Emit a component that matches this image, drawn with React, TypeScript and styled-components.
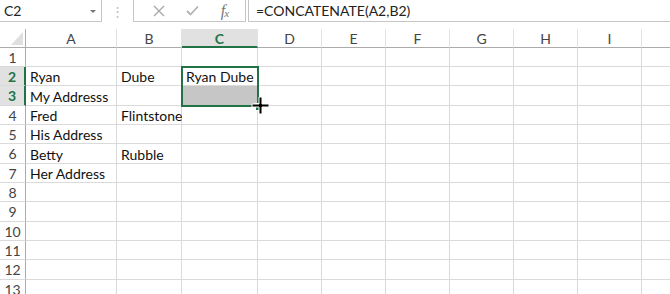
import React from 'react';
import styled, { createGlobalStyle } from 'styled-components';

const GlobalStyle = createGlobalStyle`
  html, body {
    margin: 0;
    padding: 0;
    background: #fff;
  }
  body {
    font-family: Lato, "Open Sans", sans-serif;
    overflow: hidden;
    width: 670px;
    height: 294px;
  }
`;

const GREEN = '#217346';
const GRID = '#dadada';
const HEAD_LINE = '#ababab';

// last column only peeks in at the right edge, its letter is off screen
const COLUMNS = [
  { id: 'A', width: 91, label: 'A' },
  { id: 'B', width: 65, label: 'B' },
  { id: 'C', width: 76, label: 'C' },
  { id: 'D', width: 64, label: 'D' },
  { id: 'E', width: 64, label: 'E' },
  { id: 'F', width: 64, label: 'F' },
  { id: 'G', width: 64, label: 'G' },
  { id: 'H', width: 64, label: 'H' },
  { id: 'I', width: 64, label: 'I' },
  { id: 'J', width: 64, label: '' },
];

const ROW_HEIGHTS = [19, 19, 20, 19, 19, 20, 19, 19, 20, 19, 19, 20, 19];

const DATA: Record<string, string> = {
  A2: 'Ryan',
  B2: 'Dube',
  C2: 'Ryan Dube',
  A3: 'My Addresss',
  A4: 'Fred',
  B4: 'Flintstone',
  A5: 'His Address',
  A6: 'Betty',
  B6: 'Rubble',
  A7: 'Her Address',
};

const SELECTED_COL = 'C';
const SELECTED_ROWS = [2, 3];

const Page = styled.div`
  width: 670px;
  height: 294px;
  overflow: hidden;
  display: flex;
  flex-direction: column;
`;

const TopBar = styled.div`
  display: flex;
  height: 22px;
  flex-shrink: 0;
  margin-bottom: 7px;
`;

const NameBox = styled.div`
  width: 102px;
  box-sizing: border-box;
  border-right: 1px solid #c6c6c6;
  border-bottom: 1px solid #c6c6c6;
  display: flex;
  align-items: center;
  justify-content: space-between;
  padding: 0 5px 0 4px;
  font-size: 14px;
  color: #222;
`;

const DropArrow = styled.span`
  width: 0;
  height: 0;
  border-left: 3px solid transparent;
  border-right: 3px solid transparent;
  border-top: 3px solid #777;
  margin-top: 1px;
`;

const Grip = styled.div`
  width: 31px;
  display: flex;
  align-items: center;
  justify-content: center;
  color: #bdbdbd;
  font-size: 13px;
`;

const FnButtons = styled.div`
  width: 113px;
  box-sizing: border-box;
  border-left: 1px solid #c6c6c6;
  border-right: 1px solid #c6c6c6;
  border-bottom: 1px solid #c6c6c6;
  display: flex;
  align-items: center;
  justify-content: space-around;
  padding: 0 6px 0 8px;
`;

const FxLabel = styled.span`
  font-family: "Liberation Serif", serif;
  font-style: italic;
  font-size: 16px;
  color: #777;
  letter-spacing: -1px;

  sub {
    font-size: 11px;
    vertical-align: -1px;
  }
`;

const FormulaBox = styled.div`
  flex: 1;
  margin-left: 2px;
  border-left: 1px solid #c6c6c6;
  border-bottom: 1px solid #c6c6c6;
  display: flex;
  align-items: center;
  padding-left: 7px;
  font-size: 14px;
  color: #222;
`;

const SheetWrap = styled.div`
  position: relative;
  flex: 1;
  overflow: hidden;
`;

const Sheet = styled.div`
  display: grid;
  grid-template-columns: 26px ${COLUMNS.map((c) => `${c.width}px`).join(' ')};
  grid-template-rows: 19px ${ROW_HEIGHTS.map((h) => `${h}px`).join(' ')};
`;

const Corner = styled.div`
  position: relative;
  box-sizing: border-box;
  border-right: 1px solid ${HEAD_LINE};
  border-bottom: 1px solid ${HEAD_LINE};

  &::after {
    content: '';
    position: absolute;
    right: 2px;
    bottom: 2px;
    width: 0;
    height: 0;
    border-left: 12px solid transparent;
    border-bottom: 13px solid #dfdfdf;
  }
`;

const ColHead = styled.div<{ $selected?: boolean }>`
  box-sizing: border-box;
  display: flex;
  align-items: center;
  justify-content: center;
  font-size: 14px;
  color: ${(p) => (p.$selected ? GREEN : '#444')};
  font-weight: ${(p) => (p.$selected ? 700 : 400)};
  background: ${(p) => (p.$selected ? '#e1e1e1' : '#fff')};
  border-right: 1px solid #e2e2e2;
  border-bottom: ${(p) => (p.$selected ? `2px solid ${GREEN}` : `1px solid ${HEAD_LINE}`)};
  padding-top: ${(p) => (p.$selected ? '1px' : '0')};
`;

const RowHead = styled.div<{ $selected?: boolean }>`
  box-sizing: border-box;
  display: flex;
  align-items: center;
  justify-content: center;
  font-size: 14px;
  color: ${(p) => (p.$selected ? GREEN : '#444')};
  font-weight: ${(p) => (p.$selected ? 700 : 400)};
  background: ${(p) => (p.$selected ? '#e1e1e1' : '#fff')};
  border-right: ${(p) => (p.$selected ? `2px solid ${GREEN}` : `1px solid ${HEAD_LINE}`)};
  border-bottom: 1px solid ${GRID};
`;

const Cell = styled.div<{ $shaded?: boolean }>`
  box-sizing: border-box;
  display: flex;
  align-items: flex-end;
  padding: 0 0 0 4px;
  font-size: 14px;
  line-height: 17px;
  color: #111;
  white-space: nowrap;
  background: ${(p) => (p.$shaded ? '#c6c6c6' : '#fff')};
  border-right: 1px solid ${GRID};
  border-bottom: 1px solid ${GRID};
`;

const Selection = styled.div`
  position: absolute;
  left: 181px;
  top: 37px;
  width: 78px;
  height: 41px;
  box-sizing: border-box;
  border: 2px solid ${GREEN};
  pointer-events: none;
`;

const FillHandle = styled.div`
  position: absolute;
  left: 255px;
  top: 74px;
  width: 6px;
  height: 6px;
  background: ${GREEN};
  border: 1px solid #fff;
`;

const CrossCursor = styled.svg`
  position: absolute;
  left: 251px;
  top: 67px;
`;

const CloseIcon = () => (
  <svg width="12" height="12" viewBox="0 0 12 12">
    <path d="M1 1 L11 11 M11 1 L1 11" stroke="#a6a6a6" strokeWidth="1.3" fill="none" />
  </svg>
);

const CheckIcon = () => (
  <svg width="13" height="11" viewBox="0 0 13 11">
    <path d="M1 6 L4.5 9.5 L12 1.5" stroke="#b3b3b3" strokeWidth="1.8" fill="none" />
  </svg>
);

const App = () => {
  return (
    <Page>
      <GlobalStyle />
      <TopBar>
        <NameBox>
          <span>C2</span>
          <DropArrow />
        </NameBox>
        <Grip>⋮</Grip>
        <FnButtons>
          <CloseIcon />
          <CheckIcon />
          <FxLabel>
            f<sub>x</sub>
          </FxLabel>
        </FnButtons>
        <FormulaBox>=CONCATENATE(A2,B2)</FormulaBox>
      </TopBar>
      <SheetWrap>
        <Sheet>
          <Corner />
          {COLUMNS.map((c) => (
            <ColHead key={c.id} $selected={c.id === SELECTED_COL}>
              {c.label}
            </ColHead>
          ))}
          {ROW_HEIGHTS.map((_, i) => {
            const row = i + 1;
            return (
              <React.Fragment key={row}>
                <RowHead $selected={SELECTED_ROWS.includes(row)}>{row}</RowHead>
                {COLUMNS.map((c) => {
                  const ref = `${c.id}${row}`;
                  return (
                    <Cell key={ref} $shaded={ref === 'C3'}>
                      {DATA[ref] ?? ''}
                    </Cell>
                  );
                })}
              </React.Fragment>
            );
          })}
        </Sheet>
        <Selection />
        <FillHandle />
        <CrossCursor width="20" height="20" viewBox="0 0 20 20">
          <path d="M8 1 H11 V8 H18 V11 H11 V18 H8 V11 H1 V8 H8 Z" fill="#000" stroke="#fff" strokeWidth="1" />
        </CrossCursor>
      </SheetWrap>
    </Page>
  );
};

export default App;
